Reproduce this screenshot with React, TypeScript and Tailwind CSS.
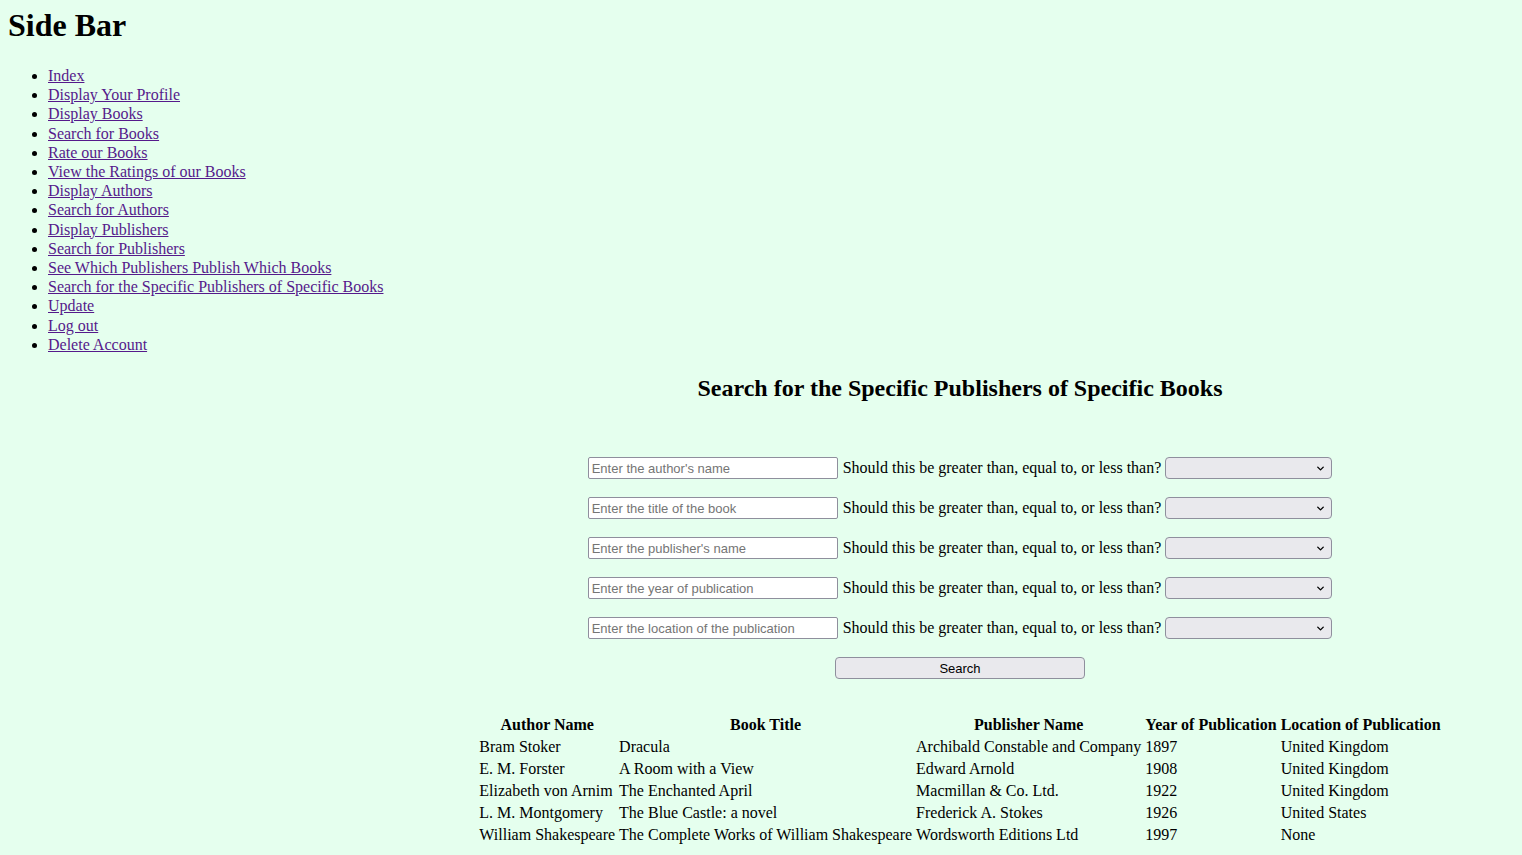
import { ChevronDown } from "lucide-react"

const links = [
  "Index",
  "Display Your Profile",
  "Display Books",
  "Search for Books",
  "Rate our Books",
  "View the Ratings of our Books",
  "Display Authors",
  "Search for Authors",
  "Display Publishers",
  "Search for Publishers",
  "See Which Publishers Publish Which Books",
  "Search for the Specific Publishers of Specific Books",
  "Update",
  "Log out",
  "Delete Account",
]

const fields = [
  "Enter the author's name",
  "Enter the title of the book",
  "Enter the publisher's name",
  "Enter the year of publication",
  "Enter the location of the publication",
]

const rows = [
  ["Bram Stoker", "Dracula", "Archibald Constable and Company", "1897", "United Kingdom"],
  ["E. M. Forster", "A Room with a View", "Edward Arnold", "1908", "United Kingdom"],
  ["Elizabeth von Arnim", "The Enchanted April", "Macmillan & Co. Ltd.", "1922", "United Kingdom"],
  ["L. M. Montgomery", "The Blue Castle: a novel", "Frederick A. Stokes", "1926", "United States"],
  ["William Shakespeare", "The Complete Works of William Shakespeare", "Wordsworth Editions Ltd", "1997", "None"],
]

const headers = [
  "Author Name",
  "Book Title",
  "Publisher Name",
  "Year of Publication",
  "Location of Publication",
]

export default function App() {
  return (
    <div className="min-h-screen bg-[#e5ffee] px-2 pb-2 font-['Liberation_Serif',serif] text-[16px] text-black">

      {/* SIDEBAR */}
      <div>
        <h1 className="pt-[7px] text-[32px] font-bold leading-[37px]">
          Side Bar
        </h1>

        <ul className="mt-[22px] list-disc pl-10">
          {links.map((name) => (
            <li key={name} className="leading-[19.2px]">
              <a href="#" className="text-[#551a8b] underline">
                {name}
              </a>
            </li>
          ))}
        </ul>
      </div>

      {/* MAIN */}
      <div className="ml-[398px]">
        <h2 className="mt-[20px] text-center text-[24px] font-bold leading-[28px]">
          Search for the Specific Publishers of Specific Books
        </h2>

        <form
          className="mt-[55px] flex flex-col items-center gap-[18px]"
          onSubmit={(e) => e.preventDefault()}
        >
          {fields.map((placeholder) => (
            <div key={placeholder} className="flex h-[22px] items-center">
              <input
                type="text"
                placeholder={placeholder}
                className="h-[22px] w-[250px] rounded-[2px] border border-[#8f8f9d] bg-white px-[3px] font-['Liberation_Sans',sans-serif] text-[13px] placeholder:text-[#757575]"
              />
              <span className="ml-[5px] mr-[4px] whitespace-nowrap">
                Should this be greater than, equal to, or less than?
              </span>
              <div className="relative h-[22px] w-[167px] rounded-[4px] border border-[#8f8f9d] bg-[#e9e9ed]">
                <ChevronDown
                  className="absolute right-[5px] top-[5px] h-[11px] w-[11px] text-black"
                  strokeWidth={3}
                />
              </div>
            </div>
          ))}

          <button
            type="submit"
            className="h-[22px] w-[250px] rounded-[4px] border border-[#8f8f9d] bg-[#e9e9ed] font-['Liberation_Sans',sans-serif] text-[13px] leading-[21px] text-black"
          >
            Search
          </button>
        </form>

        <table className="mx-auto mt-[34px] border-separate border-spacing-[2px]">
          <thead>
            <tr>
              {headers.map((h) => (
                <th key={h} className="p-px text-center font-bold leading-[18px]">
                  {h}
                </th>
              ))}
            </tr>
          </thead>
          <tbody>
            {rows.map((r) => (
              <tr key={r[0]}>
                {r.map((c, i) => (
                  <td key={i} className="p-px text-left leading-[18px] whitespace-nowrap">
                    {c}
                  </td>
                ))}
              </tr>
            ))}
          </tbody>
        </table>
      </div>

    </div>
  )
}
